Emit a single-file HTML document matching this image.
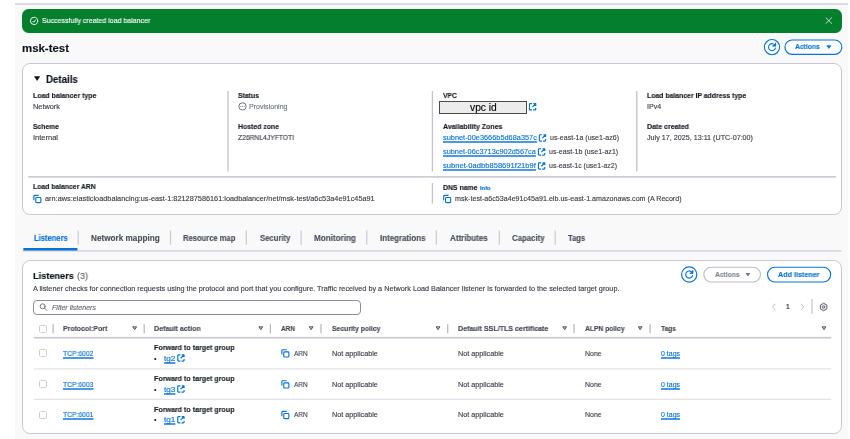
<!DOCTYPE html>
<html lang="en"><head><meta charset="utf-8"><title>msk-test | Load balancers</title>
<style>
html,body{margin:0;padding:0;background:#fff;}
body{width:850px;height:439px;overflow:hidden;font-family:"Liberation Sans",sans-serif;}
#page{position:relative;width:850px;height:439px;overflow:hidden;background:#fff;}
#page *{box-sizing:border-box;}
.abs,.t,#page svg{position:absolute;}
.t{white-space:nowrap;line-height:1.2;transform-origin:0 0;display:block;will-change:transform;-webkit-text-stroke:0.13px currentColor;}
.bg{left:15px;top:4px;width:833px;height:435px;background:#f9f9fa;}
.topline{left:15px;top:3px;width:833px;height:2px;background:#dcdce3;}
.banner{left:22.2px;top:8.7px;width:820px;height:24.2px;background:#037f2e;border-radius:6.5px;}
.card{background:#fff;border:1px solid #c9c9d2;border-radius:8px;}
.vline{width:1px;background:#c9c9d2;}
.hline{height:1px;background:#c9c9d2;}
.pill{border-radius:8px;border:1px solid #0972d3;background:#fff;}
.cb{width:8px;height:8px;border:1px solid #cdcdd5;border-radius:1.5px;background:#fff;}

</style></head>
<body>
<div id="page">
<div class="abs bg"></div>
<div class="abs topline"></div>
<div class="abs banner"></div>
<div class="abs card" style="left:22.2px;top:63.4px;width:820px;height:151.2px;"></div>
<div class="abs card" style="left:22.2px;top:259.6px;width:820px;height:174.6px;"></div>
<div class="abs" style="left:439px;top:101px;width:87.6px;height:12.6px;background:#ececec;border:1px solid #4a4a4a;"></div>
<div class="abs" style="left:33.4px;top:299.5px;width:327.2px;height:15.2px;border:1px solid #8c8c94;border-radius:4px;background:#fff;"></div>
<div class="abs cb" style="left:39px;top:325px;"></div>
<div class="abs cb" style="left:39px;top:349px;"></div>
<div class="abs cb" style="left:39px;top:380px;"></div>
<div class="abs cb" style="left:39px;top:411px;"></div>
<svg width="850" height="439" viewBox="0 0 850 439" style="left:0;top:0;pointer-events:none;"><rect x="227.35" y="91" width="1.3" height="80.40" fill="#c2c2cb"/>
<rect x="431.75" y="91" width="1.3" height="80.40" fill="#c2c2cb"/>
<rect x="636.15" y="91" width="1.3" height="80.40" fill="#c2c2cb"/>
<rect x="28.3" y="176.20" width="807.70" height="1.4" fill="#c0c0c9"/>
<rect x="431.75" y="183" width="1.3" height="20.40" fill="#c2c2cb"/>
<rect x="22.6" y="250.05" width="818.80" height="1.7" fill="#d6d6dd"/>
<rect x="77.62" y="230.4" width="1.15" height="14.40" fill="#c9c9d2"/>
<rect x="169.93" y="230.4" width="1.15" height="14.40" fill="#c9c9d2"/>
<rect x="245.73" y="230.4" width="1.15" height="14.40" fill="#c9c9d2"/>
<rect x="300.53" y="230.4" width="1.15" height="14.40" fill="#c9c9d2"/>
<rect x="366.12" y="230.4" width="1.15" height="14.40" fill="#c9c9d2"/>
<rect x="435.73" y="230.4" width="1.15" height="14.40" fill="#c9c9d2"/>
<rect x="498.73" y="230.4" width="1.15" height="14.40" fill="#c9c9d2"/>
<rect x="554.62" y="230.4" width="1.15" height="14.40" fill="#c9c9d2"/>
<rect x="811.35" y="299" width="1.3" height="15.00" fill="#cacad2"/>
<rect x="52.50" y="324.2" width="1.2" height="9.00" fill="#b4b4bc"/>
<rect x="143.60" y="324.2" width="1.2" height="9.00" fill="#b4b4bc"/>
<rect x="269.80" y="324.2" width="1.2" height="9.00" fill="#b4b4bc"/>
<rect x="320.40" y="324.2" width="1.2" height="9.00" fill="#b4b4bc"/>
<rect x="447.10" y="324.2" width="1.2" height="9.00" fill="#b4b4bc"/>
<rect x="573.40" y="324.2" width="1.2" height="9.00" fill="#b4b4bc"/>
<rect x="649.50" y="324.2" width="1.2" height="9.00" fill="#b4b4bc"/>
<rect x="33.6" y="336.90" width="797.60" height="1.6" fill="#c8c8d0"/>
<rect x="33.6" y="368.30" width="797.60" height="1.2" fill="#e2e2e8"/>
<rect x="33.6" y="398.80" width="797.60" height="1.2" fill="#e2e2e8"/>
<rect x="23.2" y="248" width="54.4" height="2.600" rx="1" fill="#0972d3"/>
<g fill="none" stroke="#fff" stroke-width="0.9" stroke-linecap="round" stroke-linejoin="round"><circle cx="34.05" cy="20.9" r="3.650"/><path d="M32.800 21.300l1 1 1.800-2.500"/></g>
<path d="M825.700 17.500l6.200 6.200M831.900 17.500l-6.200 6.200" stroke="#fff" stroke-opacity="0.9" stroke-width="0.85" fill="none"/>
<rect x="784.9499999999999" y="39.949999999999996" width="56.90" height="14.40" rx="7.20" fill="#fff" stroke="#0972d3" stroke-width="1.15"/>
<circle cx="772" cy="47.1" r="7.600" fill="#fff" stroke="#0972d3" stroke-width="1.15"/><g fill="none" stroke="#0972d3" stroke-width="1.1" stroke-linecap="round" stroke-linejoin="round"><path d="M775.2 45.7A3.5 3.5 0 1 0 775.4 48.1"/><path d="M775.6 43.1V45.9H772.8" fill="#0972d3"/></g>
<path d="M826.300 45.300h5.200l-2.600 3.800z" fill="#0972d3"/>
<path d="M34 76.200h6.200l-3.100 4.800z" fill="#0f141a"/>
<g><circle cx="242.5" cy="106.4" r="3.650" fill="none" stroke="#6f747e" stroke-width="1"/><circle cx="240.9" cy="106.4" r="0.5" fill="#6f747e"/><circle cx="242.5" cy="106.4" r="0.5" fill="#6f747e"/><circle cx="244.1" cy="106.4" r="0.5" fill="#6f747e"/></g>
<g transform="translate(528.4,102.6) scale(0.525)" fill="none" stroke="#0972d3" stroke-width="2.2" stroke-linejoin="round" stroke-linecap="butt"><path d="M7 2H3.5A1.5 1.5 0 0 0 2 3.5v9A1.5 1.5 0 0 0 3.5 14H7"/><path d="M9 14h3.5a1.5 1.5 0 0 0 1.500-1.5V10"/><path d="M9.500 2H14v4.500M14 2L7.500 8.500"/></g>
<g transform="translate(538.3,133.7) scale(0.525)" fill="none" stroke="#0972d3" stroke-width="2.2" stroke-linejoin="round" stroke-linecap="butt"><path d="M7 2H3.5A1.5 1.5 0 0 0 2 3.5v9A1.5 1.5 0 0 0 3.5 14H7"/><path d="M9 14h3.5a1.5 1.5 0 0 0 1.500-1.5V10"/><path d="M9.500 2H14v4.500M14 2L7.500 8.500"/></g>
<g transform="translate(537.4,147.7) scale(0.525)" fill="none" stroke="#0972d3" stroke-width="2.2" stroke-linejoin="round" stroke-linecap="butt"><path d="M7 2H3.5A1.5 1.5 0 0 0 2 3.5v9A1.5 1.5 0 0 0 3.5 14H7"/><path d="M9 14h3.5a1.5 1.5 0 0 0 1.500-1.5V10"/><path d="M9.500 2H14v4.500M14 2L7.500 8.500"/></g>
<g transform="translate(537.4,161.8) scale(0.525)" fill="none" stroke="#0972d3" stroke-width="2.2" stroke-linejoin="round" stroke-linecap="butt"><path d="M7 2H3.5A1.5 1.5 0 0 0 2 3.5v9A1.5 1.5 0 0 0 3.5 14H7"/><path d="M9 14h3.5a1.5 1.5 0 0 0 1.500-1.5V10"/><path d="M9.500 2H14v4.500M14 2L7.500 8.500"/></g>
<g transform="translate(32.8,194.6) scale(0.5375)" fill="none" stroke="#0972d3" stroke-width="2.1" stroke-linejoin="round"><rect x="5.500" y="5.500" width="9.500" height="9.500" rx="1.500" fill="#fff"/><path d="M2 10.500V3A1.500 1.500 0 0 1 3.500 1.500H11"/></g>
<g transform="translate(442.6,194.6) scale(0.5375)" fill="none" stroke="#0972d3" stroke-width="2.1" stroke-linejoin="round"><rect x="5.500" y="5.500" width="9.500" height="9.500" rx="1.500" fill="#fff"/><path d="M2 10.500V3A1.500 1.500 0 0 1 3.500 1.500H11"/></g>
<g fill="none" stroke="#656871" stroke-width="0.9" stroke-linecap="round"><circle cx="42.7" cy="306.3" r="2.500"/><path d="M44.600 308.200l2.200 2.200"/></g>
<rect x="703.8499999999999" y="267.25" width="56.60" height="14.70" rx="7.35" fill="#fff" stroke="#bdbdc6" stroke-width="1.15"/>
<rect x="767.55" y="267.25" width="63.10" height="14.70" rx="7.35" fill="#fff" stroke="#0972d3" stroke-width="1.15"/>
<circle cx="689.2" cy="274.5" r="7.600" fill="#fff" stroke="#0972d3" stroke-width="1.15"/><g fill="none" stroke="#0972d3" stroke-width="1.1" stroke-linecap="round" stroke-linejoin="round"><path d="M692.4000000000001 273.1A3.5 3.5 0 1 0 692.6 275.5"/><path d="M692.8000000000001 270.5V273.3H690.0" fill="#0972d3"/></g>
<path d="M745.400 273h5l-2.500 3.600z" fill="#72767e"/>
<path d="M775.300 303.800l-2.800 3 2.800 3" fill="none" stroke="#b4b4bb" stroke-width="0.9"/>
<path d="M801 303.800l2.800 3-2.800 3" fill="none" stroke="#b4b4bb" stroke-width="0.9"/>
<g fill="#e4e4ea" stroke="#555a63" stroke-width="0.95" stroke-linejoin="round"><path d="M823.600 303.200l3.250 1.900v3.800l-3.250 1.900-3.250-1.900v-3.800z"/><circle cx="823.6" cy="307" r="1.100" fill="#fff"/></g>
<path d="M132.79999999999998 326.8h3.800L134.7 329.7z" fill="#d0d0d6" stroke="#424650" stroke-width="0.9" stroke-linejoin="round"/>
<path d="M258.90000000000003 326.8h3.800L260.8 329.7z" fill="#d0d0d6" stroke="#424650" stroke-width="0.9" stroke-linejoin="round"/>
<path d="M309.20000000000005 326.8h3.800L311.1 329.7z" fill="#d0d0d6" stroke="#424650" stroke-width="0.9" stroke-linejoin="round"/>
<path d="M436.1 326.8h3.800L438 329.7z" fill="#d0d0d6" stroke="#424650" stroke-width="0.9" stroke-linejoin="round"/>
<path d="M562.8000000000001 326.8h3.800L564.7 329.7z" fill="#d0d0d6" stroke="#424650" stroke-width="0.9" stroke-linejoin="round"/>
<path d="M638.3000000000001 326.8h3.800L640.2 329.7z" fill="#d0d0d6" stroke="#424650" stroke-width="0.9" stroke-linejoin="round"/>
<path d="M822.1 326.8h3.800L824 329.7z" fill="#d0d0d6" stroke="#424650" stroke-width="0.9" stroke-linejoin="round"/>
<g transform="translate(176.7,353.8) scale(0.525)" fill="none" stroke="#0972d3" stroke-width="2.2" stroke-linejoin="round" stroke-linecap="butt"><path d="M7 2H3.5A1.5 1.5 0 0 0 2 3.5v9A1.5 1.5 0 0 0 3.5 14H7"/><path d="M9 14h3.5a1.5 1.5 0 0 0 1.500-1.5V10"/><path d="M9.500 2H14v4.500M14 2L7.500 8.500"/></g>
<g transform="translate(280.8,348.9) scale(0.5375)" fill="none" stroke="#0972d3" stroke-width="2.1" stroke-linejoin="round"><rect x="5.500" y="5.500" width="9.500" height="9.500" rx="1.500" fill="#fff"/><path d="M2 10.500V3A1.500 1.500 0 0 1 3.500 1.500H11"/></g>
<g transform="translate(176.7,384.8) scale(0.525)" fill="none" stroke="#0972d3" stroke-width="2.2" stroke-linejoin="round" stroke-linecap="butt"><path d="M7 2H3.5A1.5 1.5 0 0 0 2 3.5v9A1.5 1.5 0 0 0 3.5 14H7"/><path d="M9 14h3.5a1.5 1.5 0 0 0 1.500-1.5V10"/><path d="M9.500 2H14v4.500M14 2L7.500 8.500"/></g>
<g transform="translate(280.8,379.9) scale(0.5375)" fill="none" stroke="#0972d3" stroke-width="2.1" stroke-linejoin="round"><rect x="5.500" y="5.500" width="9.500" height="9.500" rx="1.500" fill="#fff"/><path d="M2 10.500V3A1.500 1.500 0 0 1 3.500 1.500H11"/></g>
<g transform="translate(176.7,415.5) scale(0.525)" fill="none" stroke="#0972d3" stroke-width="2.2" stroke-linejoin="round" stroke-linecap="butt"><path d="M7 2H3.5A1.5 1.5 0 0 0 2 3.5v9A1.5 1.5 0 0 0 3.5 14H7"/><path d="M9 14h3.5a1.5 1.5 0 0 0 1.500-1.5V10"/><path d="M9.500 2H14v4.500M14 2L7.500 8.500"/></g>
<g transform="translate(280.8,410.59999999999997) scale(0.5375)" fill="none" stroke="#0972d3" stroke-width="2.1" stroke-linejoin="round"><rect x="5.500" y="5.500" width="9.500" height="9.500" rx="1.500" fill="#fff"/><path d="M2 10.500V3A1.500 1.500 0 0 1 3.500 1.500H11"/></g></svg>
<div class="flash" role="status">
<span class="t" id="t0" style="left:42.20px;top:17.00px;font-size:7.3px;color:#ffffff;transform:scaleX(0.9604);">Successfully created load balancer</span>
</div>
<header class="page-header">
<span class="t" id="t1" style="left:22.20px;top:43.00px;font-size:10.4px;color:#0f141a;font-weight:700;transform:scaleX(1.0994);">msk-test</span>
<span class="t" id="t2" style="left:795.20px;top:43.00px;font-size:7.3px;color:#0972d3;font-weight:700;transform:scaleX(0.9266);">Actions</span>
</header>
<section class="details" aria-label="Details">
<span class="t" id="t3" style="left:46.20px;top:74.00px;font-size:10.2px;color:#0f141a;font-weight:700;transform:scaleX(0.9515);">Details</span>
<span class="t" id="t4" style="left:32.60px;top:92.00px;font-size:7.3px;color:#16191f;font-weight:700;transform:scaleX(0.9532);">Load balancer type</span>
<span class="t" id="t5" style="left:32.60px;top:103.00px;font-size:7.0px;color:#3a3d45;transform:scaleX(1.0511);">Network</span>
<span class="t" id="t6" style="left:32.60px;top:123.00px;font-size:7.3px;color:#16191f;font-weight:700;transform:scaleX(0.9214);">Scheme</span>
<span class="t" id="t7" style="left:32.60px;top:134.00px;font-size:7.0px;color:#3a3d45;transform:scaleX(1.0702);">Internal</span>
<span class="t" id="t8" style="left:238.00px;top:92.00px;font-size:7.3px;color:#16191f;font-weight:700;transform:scaleX(0.9412);">Status</span>
<span class="t" id="t9" style="left:248.90px;top:103.00px;font-size:7.0px;color:#6f747e;transform:scaleX(1.0094);">Provisioning</span>
<span class="t" id="t10" style="left:238.00px;top:123.00px;font-size:7.3px;color:#16191f;font-weight:700;transform:scaleX(0.9449);">Hosted zone</span>
<span class="t" id="t11" style="left:238.00px;top:134.00px;font-size:7.0px;color:#3a3d45;transform:scaleX(0.9619);">Z26RNL4JYFTOTI</span>
<span class="t" id="t12" style="left:442.60px;top:92.00px;font-size:7.3px;color:#16191f;font-weight:700;transform:scaleX(0.9190);">VPC</span>
<span class="t" id="t13" style="left:469.60px;top:102.00px;font-size:10.0px;color:#000;transform:scaleX(1.0258);">vpc id</span>
<span class="t" id="t14" style="left:442.60px;top:123.00px;font-size:7.3px;color:#16191f;font-weight:700;transform:scaleX(0.9615);">Availability Zones</span>
<span class="t" id="t15" style="left:442.80px;top:134.00px;font-size:7.0px;color:#0972d3;text-decoration:underline;text-underline-offset:1.4px;text-decoration-thickness:1.5px;text-decoration-color:#4d97e3;transform:scaleX(1.0534);">subnet-00e3666b5d68a357c</span>
<span class="t" id="t16" style="left:550.00px;top:134.00px;font-size:7.0px;color:#3a3d45;transform:scaleX(1.0075);">us-east-1a (use1-az6)</span>
<span class="t" id="t17" style="left:442.80px;top:148.00px;font-size:7.0px;color:#0972d3;text-decoration:underline;text-underline-offset:1.4px;text-decoration-thickness:1.5px;text-decoration-color:#4d97e3;transform:scaleX(1.0514);">subnet-06c3713c902d567ca</span>
<span class="t" id="t18" style="left:549.00px;top:148.00px;font-size:7.0px;color:#3a3d45;transform:scaleX(1.0104);">us-east-1b (use1-az1)</span>
<span class="t" id="t19" style="left:442.80px;top:162.00px;font-size:7.0px;color:#0972d3;text-decoration:underline;text-underline-offset:1.4px;text-decoration-thickness:1.5px;text-decoration-color:#4d97e3;transform:scaleX(1.0848);">subnet-0adbb858691f21b9f</span>
<span class="t" id="t20" style="left:549.00px;top:162.00px;font-size:7.0px;color:#3a3d45;transform:scaleX(0.9986);">us-east-1c (use1-az2)</span>
<span class="t" id="t21" style="left:647.00px;top:92.00px;font-size:7.3px;color:#16191f;font-weight:700;transform:scaleX(0.9420);">Load balancer IP address type</span>
<span class="t" id="t22" style="left:647.00px;top:103.00px;font-size:7.0px;color:#3a3d45;transform:scaleX(1.0132);">IPv4</span>
<span class="t" id="t23" style="left:647.00px;top:123.00px;font-size:7.3px;color:#16191f;font-weight:700;transform:scaleX(0.9586);">Date created</span>
<span class="t" id="t24" style="left:647.00px;top:134.00px;font-size:7.0px;color:#3a3d45;transform:scaleX(1.0254);">July 17, 2025, 13:11 (UTC-07:00)</span>
<span class="t" id="t25" style="left:33.00px;top:183.00px;font-size:7.3px;color:#16191f;font-weight:700;transform:scaleX(0.9352);">Load balancer ARN</span>
<span class="t" id="t26" style="left:45.30px;top:195.00px;font-size:7.0px;color:#3a3d45;transform:scaleX(1.0472);">arn:aws:elasticloadbalancing:us-east-1:821287586161:loadbalancer/net/msk-test/a6c53a4e91c45a91</span>
<span class="t" id="t27" style="left:442.60px;top:184.00px;font-size:7.3px;color:#16191f;font-weight:700;transform:scaleX(0.9425);">DNS name</span>
<span class="t" id="t28" style="left:479.60px;top:185.00px;font-size:5.5px;color:#0972d3;font-weight:700;transform:scaleX(1.0502);">Info</span>
<span class="t" id="t29" style="left:455.40px;top:195.00px;font-size:7.0px;color:#3a3d45;transform:scaleX(1.0181);">msk-test-a6c53a4e91c45a91.elb.us-east-1.amazonaws.com (A Record)</span>
</section>
<nav class="tabs" aria-label="Load balancer tabs">
<span class="t" id="t30" style="left:33.50px;top:234.00px;font-size:8.2px;color:#0972d3;font-weight:700;transform:scaleX(0.9284);">Listeners</span>
<span class="t" id="t31" style="left:90.70px;top:234.00px;font-size:8.2px;color:#4a4f58;font-weight:700;transform:scaleX(1.0000);">Network mapping</span>
<span class="t" id="t32" style="left:183.30px;top:234.00px;font-size:8.2px;color:#4a4f58;font-weight:700;transform:scaleX(0.9285);">Resource map</span>
<span class="t" id="t33" style="left:259.90px;top:234.00px;font-size:8.2px;color:#4a4f58;font-weight:700;transform:scaleX(0.9408);">Security</span>
<span class="t" id="t34" style="left:314.20px;top:234.00px;font-size:8.2px;color:#4a4f58;font-weight:700;transform:scaleX(0.9883);">Monitoring</span>
<span class="t" id="t35" style="left:380.20px;top:234.00px;font-size:8.2px;color:#4a4f58;font-weight:700;transform:scaleX(0.9710);">Integrations</span>
<span class="t" id="t36" style="left:449.90px;top:234.00px;font-size:8.2px;color:#4a4f58;font-weight:700;transform:scaleX(0.9775);">Attributes</span>
<span class="t" id="t37" style="left:511.60px;top:234.00px;font-size:8.2px;color:#4a4f58;font-weight:700;transform:scaleX(0.9549);">Capacity</span>
<span class="t" id="t38" style="left:567.80px;top:234.00px;font-size:8.2px;color:#4a4f58;font-weight:700;transform:scaleX(0.9181);">Tags</span>
</nav>
<section class="listeners" aria-label="Listeners">
<span class="t" id="t39" style="left:33.00px;top:270.00px;font-size:9.8px;color:#0f141a;font-weight:700;transform:scaleX(0.9389);">Listeners</span>
<span class="t" id="t40" style="left:76.90px;top:270.00px;font-size:9.8px;color:#656871;transform:scaleX(0.9262);">(3)</span>
<span class="t" id="t41" style="left:33.00px;top:285.00px;font-size:7.0px;color:#3a3d45;transform:scaleX(1.0390);">A listener checks for connection requests using the protocol and port that you configure. Traffic received by a Network Load Balancer listener is forwarded to the selected target group.</span>
<span class="t" id="t42" style="left:52.00px;top:304.00px;font-size:7.0px;color:#656871;font-style:italic;transform:scaleX(1.0097);">Filter listeners</span>
<span class="t" id="t43" style="left:714.80px;top:271.00px;font-size:7.3px;color:#80848c;font-weight:700;transform:scaleX(0.9228);">Actions</span>
<span class="t" id="t44" style="left:778.00px;top:271.00px;font-size:7.3px;color:#0972d3;font-weight:700;transform:scaleX(0.9841);">Add listener</span>
<span class="t" id="t45" style="left:786.30px;top:303.00px;font-size:7.0px;color:#424650;font-weight:700;transform:scaleX(0.8960);">1</span>
</section>
<div class="listeners-table" role="table">
<span class="t" id="t46" style="left:63.30px;top:325.00px;font-size:7.3px;color:#424650;font-weight:700;transform:scaleX(0.9501);">Protocol:Port</span>
<span class="t" id="t47" style="left:154.20px;top:325.00px;font-size:7.3px;color:#424650;font-weight:700;transform:scaleX(0.9699);">Default action</span>
<span class="t" id="t48" style="left:280.80px;top:325.00px;font-size:7.3px;color:#424650;font-weight:700;transform:scaleX(0.8854);">ARN</span>
<span class="t" id="t49" style="left:331.60px;top:325.00px;font-size:7.3px;color:#424650;font-weight:700;transform:scaleX(0.9322);">Security policy</span>
<span class="t" id="t50" style="left:457.80px;top:325.00px;font-size:7.3px;color:#424650;font-weight:700;transform:scaleX(0.9682);">Default SSL/TLS certificate</span>
<span class="t" id="t51" style="left:584.70px;top:325.00px;font-size:7.3px;color:#424650;font-weight:700;transform:scaleX(0.9189);">ALPN policy</span>
<span class="t" id="t52" style="left:660.50px;top:325.00px;font-size:7.3px;color:#424650;font-weight:700;transform:scaleX(0.8970);">Tags</span>
<span class="t" id="t53" style="left:63.10px;top:350.00px;font-size:7.0px;color:#0972d3;text-decoration:underline;text-underline-offset:1.4px;text-decoration-thickness:1.5px;text-decoration-color:#4d97e3;transform:scaleX(0.9673);">TCP:6002</span>
<span class="t" id="t54" style="left:154.10px;top:344.00px;font-size:7.3px;color:#16191f;font-weight:700;transform:scaleX(0.9734);">Forward to target group</span>
<span class="t" id="t55" style="left:153.50px;top:355.00px;font-size:7.0px;color:#16191f;">•</span>
<span class="t" id="t56" style="left:164.20px;top:355.00px;font-size:7.0px;color:#0972d3;text-decoration:underline;text-underline-offset:1.4px;text-decoration-thickness:1.5px;text-decoration-color:#4d97e3;transform:scaleX(1.1711);">tg2</span>
<span class="t" id="t57" style="left:293.60px;top:350.00px;font-size:7.0px;color:#3a3d45;transform:scaleX(0.9201);">ARN</span>
<span class="t" id="t58" style="left:331.60px;top:350.00px;font-size:7.0px;color:#3a3d45;transform:scaleX(1.0344);">Not applicable</span>
<span class="t" id="t59" style="left:457.80px;top:350.00px;font-size:7.0px;color:#3a3d45;transform:scaleX(1.0344);">Not applicable</span>
<span class="t" id="t60" style="left:584.70px;top:350.00px;font-size:7.0px;color:#3a3d45;transform:scaleX(0.9860);">None</span>
<span class="t" id="t61" style="left:660.50px;top:350.00px;font-size:7.0px;color:#0972d3;text-decoration:underline;text-underline-offset:1.4px;text-decoration-thickness:1.5px;text-decoration-color:#4d97e3;transform:scaleX(0.9959);">0 tags</span>
<span class="t" id="t62" style="left:63.10px;top:381.00px;font-size:7.0px;color:#0972d3;text-decoration:underline;text-underline-offset:1.4px;text-decoration-thickness:1.5px;text-decoration-color:#4d97e3;transform:scaleX(0.9673);">TCP:6003</span>
<span class="t" id="t63" style="left:154.10px;top:375.00px;font-size:7.3px;color:#16191f;font-weight:700;transform:scaleX(0.9734);">Forward to target group</span>
<span class="t" id="t64" style="left:153.50px;top:386.00px;font-size:7.0px;color:#16191f;">•</span>
<span class="t" id="t65" style="left:164.20px;top:386.00px;font-size:7.0px;color:#0972d3;text-decoration:underline;text-underline-offset:1.4px;text-decoration-thickness:1.5px;text-decoration-color:#4d97e3;transform:scaleX(1.1711);">tg3</span>
<span class="t" id="t66" style="left:293.60px;top:381.00px;font-size:7.0px;color:#3a3d45;transform:scaleX(0.9201);">ARN</span>
<span class="t" id="t67" style="left:331.60px;top:381.00px;font-size:7.0px;color:#3a3d45;transform:scaleX(1.0344);">Not applicable</span>
<span class="t" id="t68" style="left:457.80px;top:381.00px;font-size:7.0px;color:#3a3d45;transform:scaleX(1.0344);">Not applicable</span>
<span class="t" id="t69" style="left:584.70px;top:381.00px;font-size:7.0px;color:#3a3d45;transform:scaleX(0.9860);">None</span>
<span class="t" id="t70" style="left:660.50px;top:381.00px;font-size:7.0px;color:#0972d3;text-decoration:underline;text-underline-offset:1.4px;text-decoration-thickness:1.5px;text-decoration-color:#4d97e3;transform:scaleX(0.9959);">0 tags</span>
<span class="t" id="t71" style="left:63.10px;top:411.00px;font-size:7.0px;color:#0972d3;text-decoration:underline;text-underline-offset:1.4px;text-decoration-thickness:1.5px;text-decoration-color:#4d97e3;transform:scaleX(0.9673);">TCP:6001</span>
<span class="t" id="t72" style="left:154.10px;top:406.00px;font-size:7.3px;color:#16191f;font-weight:700;transform:scaleX(0.9734);">Forward to target group</span>
<span class="t" id="t73" style="left:153.50px;top:416.00px;font-size:7.0px;color:#16191f;">•</span>
<span class="t" id="t74" style="left:164.20px;top:416.00px;font-size:7.0px;color:#0972d3;text-decoration:underline;text-underline-offset:1.4px;text-decoration-thickness:1.5px;text-decoration-color:#4d97e3;transform:scaleX(1.1711);">tg1</span>
<span class="t" id="t75" style="left:293.60px;top:411.00px;font-size:7.0px;color:#3a3d45;transform:scaleX(0.9201);">ARN</span>
<span class="t" id="t76" style="left:331.60px;top:411.00px;font-size:7.0px;color:#3a3d45;transform:scaleX(1.0344);">Not applicable</span>
<span class="t" id="t77" style="left:457.80px;top:411.00px;font-size:7.0px;color:#3a3d45;transform:scaleX(1.0344);">Not applicable</span>
<span class="t" id="t78" style="left:584.70px;top:411.00px;font-size:7.0px;color:#3a3d45;transform:scaleX(0.9860);">None</span>
<span class="t" id="t79" style="left:660.50px;top:411.00px;font-size:7.0px;color:#0972d3;text-decoration:underline;text-underline-offset:1.4px;text-decoration-thickness:1.5px;text-decoration-color:#4d97e3;transform:scaleX(0.9959);">0 tags</span>
</div>
</div>
</body></html>
